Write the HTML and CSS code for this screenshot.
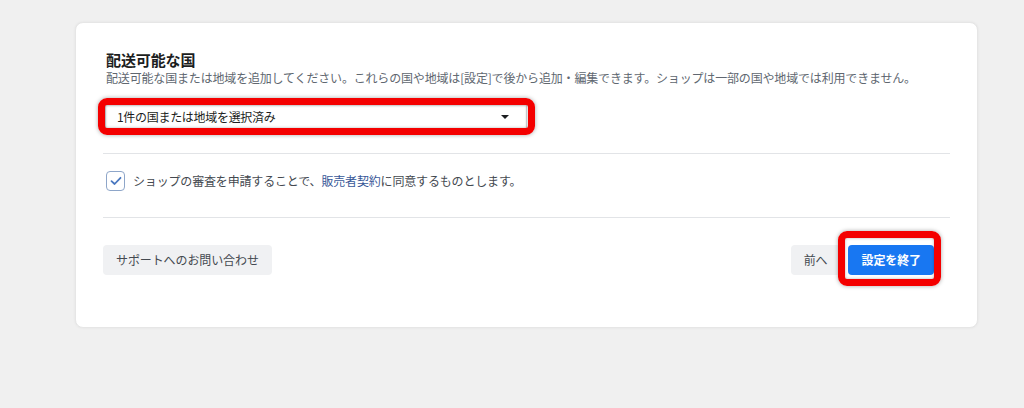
FILE: index.html
```html
<!DOCTYPE html>
<html lang="ja">
<head>
<meta charset="utf-8">
<link rel="stylesheet" href="styles.css">
</head>
<body>
<div class="card">
  <section class="countries">
    <h2 class="title">配送可能な国</h2>
    <p class="desc">配送可能な国または地域を追加してください。これらの国や地域は[設定]で後から追加・編集できます。ショップは一部の国や地域では利用できません。</p>
    <div class="field-wrap">
      <div class="select">
        <span class="select-text">1件の国または地域を選択済み</span>
        <span class="caret"></span>
      </div>
      <span class="mark mark-select"></span>
    </div>
  </section>
  <div class="agree">
    <span class="checkbox">
      <svg width="12" height="10" viewBox="0 0 12 10"><path d="M1.5 5.2 L4.6 8 L10.5 1.8" fill="none" stroke="#4a78c0" stroke-width="1.8" stroke-linecap="round" stroke-linejoin="round"/></svg>
    </span>
    <span class="agree-text">ショップの審査を申請することで、<a class="link">販売者契約</a>に同意するものとします。</span>
  </div>
  <div class="footer">
    <button class="btn btn-gray">サポートへのお問い合わせ</button>
    <div class="actions">
      <button class="btn btn-gray btn-prev">前へ</button>
      <div class="primary-wrap">
        <button class="btn btn-blue">設定を終了</button>
        <span class="mark mark-btn"></span>
      </div>
    </div>
  </div>
</div>
</body>
</html>
```
FILE: styles.css
```css
* { box-sizing: border-box; }
html, body { margin: 0; }
body {
  background: #f0f0f0;
  padding: 22px 46px 0 75px;
  font-family: "Noto Sans CJK JP", "Liberation Sans", sans-serif;
  color: #1c1e21;
  height: 408px;
}
.card {
  background: #fff;
  width: 903px;
  height: 306px;
  border-radius: 8px;
  border: 1px solid #e6e6e6;
  box-shadow: 0 0 3px rgba(0,0,0,0.06);
  padding: 0 27px;
}
.countries {
  padding: 27px 0 24px;
  border-bottom: 1px solid #e2e4e7;
}
.title {
  margin: 0 0 0 3px;
  font-size: 15px;
  line-height: 20px;
  font-weight: 700;
  letter-spacing: -0.1px;
  color: #1c1e21;
}
.desc {
  margin: 0 0 0 3px;
  font-size: 12px;
  line-height: 16px;
  letter-spacing: -0.17px;
  color: #606770;
}
.field-wrap {
  position: relative;
  margin: 18px 0 0 2px;
  width: 422px;
}
.select {
  height: 25px;
  border: 1px solid #ccd0d5;
  box-shadow: inset 0 1px 2px rgba(0,0,0,0.12);
  display: flex;
  align-items: center;
  justify-content: space-between;
  padding: 0 17px 0 11px;
  background: #fff;
}
.select-text {
  font-size: 12px;
  letter-spacing: -0.3px;
  color: #1c1e21;
  line-height: 16px;
}
.caret {
  width: 0;
  height: 0;
  border-left: 4px solid transparent;
  border-right: 4px solid transparent;
  border-top: 4px solid #1c1e21;
}
.mark {
  position: absolute;
  border: 7px solid #f40000;
  border-radius: 9px;
  box-shadow: 0 0 4px rgba(0,0,0,0.35), inset 0 0 3px rgba(0,0,0,0.3);
  pointer-events: none;
}
.mark-select {
  left: -7px;
  right: -8px;
  top: -6px;
  bottom: -6px;
}
.agree {
  display: flex;
  align-items: center;
  padding: 17px 0 26px 3px;
  border-bottom: 1px solid #e2e4e7;
}
.checkbox {
  width: 19px;
  height: 20px;
  border: 1.5px solid #8ea6c9;
  border-radius: 4px;
  display: flex;
  align-items: center;
  justify-content: center;
  margin-right: 8px;
  background: #fff;
}
.agree-text {
  font-size: 12px;
  line-height: 16px;
  letter-spacing: -0.17px;
  color: #444950;
}
.link { color: #385898; }
.footer {
  display: flex;
  justify-content: space-between;
  align-items: center;
  padding-top: 27px;
}
.btn {
  height: 30px;
  border: none;
  border-radius: 4px;
  font-family: inherit;
  font-size: 12px;
  letter-spacing: -0.1px;
  padding: 0 14px;
  line-height: 30px;
}
.btn-gray {
  background: #f0f1f3;
  color: #444950;
}
.btn-gray:first-child { padding: 0 13px; }
.actions {
  display: flex;
  align-items: center;
  gap: 8px;
  margin-right: 16px;
}
.primary-wrap { position: relative; }
.btn-blue {
  background: #1877f2;
  color: #fff;
  font-weight: 700;
  padding: 0 13px;
}
.mark-btn {
  left: -10px;
  right: -7px;
  top: -14px;
  bottom: -11px;
}
```
